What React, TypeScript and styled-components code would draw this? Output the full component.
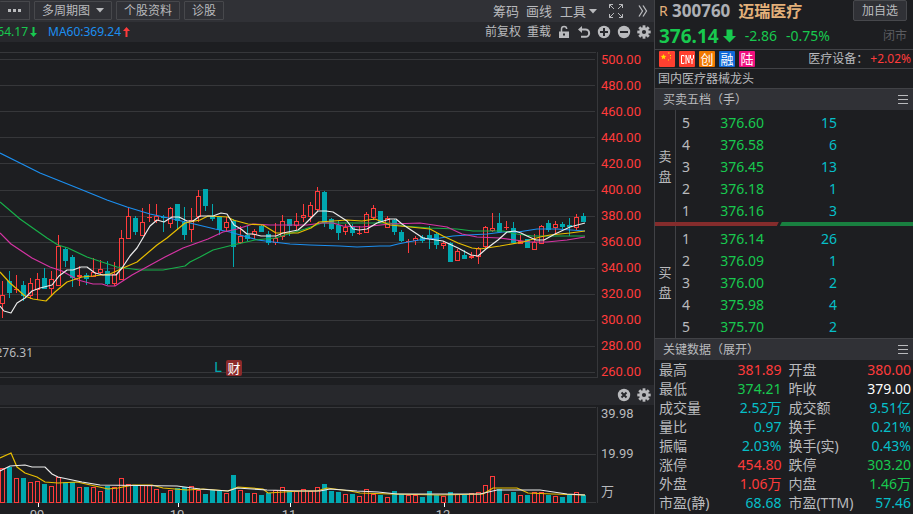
import React from "react";
import styled, { createGlobalStyle } from "styled-components";

const c = {
  bg: "#1d1e21",
  bar: "#303136",
  subbar: "#27282c",
  line: "#36373a",
  border: "#414246",
  text: "#b9babd",
  red: "#ff3b3b",
  green: "#18c94f",
  cyan: "#06bfc8",
  teal: "#00a8b0",
};

const Global = createGlobalStyle`
  * { box-sizing: border-box; }
  body {
    margin: 0;
    background: ${c.bg};
    color: ${c.text};
    font: 12px/16px "Noto Sans", "Noto Sans CJK SC", sans-serif;
    overflow: hidden;
  }
  button { font: inherit; color: inherit; cursor: pointer; }
`;

const Page = styled.div`
  display: flex;
  min-height: 100vh;
`;
const ChartSide = styled.main`
  flex: 1;
  min-width: 0;
  display: flex;
  flex-direction: column;
`;
const QuoteSide = styled.aside`
  width: 259px;
  flex: none;
  border-left: 1px solid ${c.border};
`;

const Toolbar = styled.div`
  display: flex;
  align-items: center;
  height: 22px;
  padding-right: 6px;
  background: ${c.bar};
`;
const ToolButton = styled.button<{ $edge?: boolean }>`
  display: flex;
  align-items: center;
  gap: 6px;
  height: 19px;
  margin: 0 4px 1px 0;
  padding: 0 7px;
  background: none;
  border: 1px solid #47484c;
  border-left-width: ${(p) => (p.$edge ? 0 : 1)}px;
  border-radius: 1px;
  white-space: nowrap;
`;
const Spacer = styled.div`
  flex: 1;
`;
const PlainButton = styled.button<{ $size?: number; $gap?: number }>`
  display: flex;
  align-items: center;
  gap: 3px;
  margin: 0 0 0 ${(p) => p.$gap ?? 6}px;
  padding: 0;
  border: 0;
  background: none;
  font-size: ${(p) => p.$size ?? 12}px;
  line-height: 16px;
  white-space: nowrap;
`;
const Subbar = styled.div`
  display: flex;
  align-items: center;
  height: 20px;
  padding-right: 3px;
  background: ${c.subbar};
`;
const AverageValue = styled.div<{ $color: string; $width?: number }>`
  display: flex;
  justify-content: flex-end;
  width: ${(p) => (p.$width ? p.$width + "px" : "auto")};
  overflow: hidden;
  color: ${(p) => p.$color};
`;
const MaGroup = styled.div`
  display: flex;
  align-items: center;
  gap: 2px;
  margin-right: 11px;
`;

const Pane = styled.div`
  display: flex;
`;
const Plot = styled.svg<{ $h: number }>`
  flex: 1;
  min-width: 0;
  height: ${(p) => p.$h}px;
  font: 12px "Noto Sans", "Noto Sans CJK SC", sans-serif;
`;
const PriceAxis = styled.div`
  width: 56px;
  padding: 5px 0 0 3px;
  color: ${c.red};
  font: 13px/26px Roboto, sans-serif;
`;
const VolumeAxis = styled.div`
  display: grid;
  grid-template-rows: 18px 62px 14px;
  align-content: start;
  align-items: center;
  width: 56px;
  padding-left: 3px;
  font: 13px/14px Roboto, "Noto Sans CJK SC", sans-serif;
`;

const TitleRow = styled.div`
  display: flex;
  align-items: center;
  height: 22px;
  padding: 0 6px 0 4px;
  color: #e3b07a;
`;
const Mark = styled.span`
  font-size: 14px;
  width: 13px;
`;
const Code = styled.strong`
  color: #aeb0b5;
  font-size: 17px;
  line-height: 22px;
  margin-right: 8px;
`;
const Name = styled.strong`
  font-size: 16px;
  line-height: 22px;
`;
const AddButton = styled.button`
  height: 21px;
  width: 54px;
  margin: 0 0 1px;
  padding: 0;
  border: 1px solid #47484c;
  border-radius: 2px;
  background: ${c.bar};
  color: ${c.text};
`;
const PriceRow = styled.div`
  display: flex;
  align-items: center;
  height: 27px;
  padding: 0 6px 0 4px;
  color: ${c.green};
  font-size: 14px;
`;
const Last = styled.strong`
  font-size: 19px;
  line-height: 24px;
  margin-right: 4px;
`;
const Delta = styled.span`
  margin-left: 9px;
`;
const Status = styled.span`
  color: #5b5c60;
  font-size: 12px;
`;
const BadgeRow = styled.div`
  display: flex;
  align-items: center;
  gap: 4px;
  height: 19px;
  padding: 0 2px 0 4px;
  border-top: 1px solid ${c.border};
`;
const Badge = styled.span<{ $bg: string }>`
  width: 16px;
  height: 16px;
  border-radius: 1px;
  background: ${(p) => p.$bg};
  color: #fff;
  font-size: 13px;
  line-height: 16px;
  text-align: center;
`;
const Sector = styled.span`
  margin-left: auto;
  white-space: nowrap;
`;
const SectorMove = styled.span`
  margin-left: 2px;
  color: ${c.red};
`;
const Note = styled.div`
  height: 20px;
  padding-left: 3px;
  border-top: 1px solid ${c.border};
  line-height: 19px;
`;
const SectionHead = styled.div`
  display: flex;
  align-items: center;
  justify-content: space-between;
  height: 22px;
  padding: 0 5px 0 8px;
  border-top: 1px solid ${c.border};
  background: ${c.bar};
`;
const Book = styled.div`
  display: flex;
  height: 112px;
`;
const BookSide = styled.div`
  display: flex;
  flex-direction: column;
  justify-content: center;
  width: 21px;
  border-right: 1px solid ${c.border};
  font-size: 13px;
  line-height: 20px;
  text-align: center;
`;
const BookTable = styled.table`
  flex: 1;
  margin-top: 2px;
  border-collapse: collapse;
  table-layout: fixed;
  font-size: 14px;
  line-height: 22px;
  td { padding: 0; height: 22px; }
`;
const Level = styled.td`
  width: 32px;
  text-indent: 6px;
`;
const BookPrice = styled.td`
  width: 56px;
  color: ${c.green};
  text-align: right;
`;
const BookVolume = styled.td`
  width: 73px;
  color: ${c.cyan};
  text-align: right;
`;
const Ratio = styled.div`
  display: flex;
  height: 4px;
`;
const RatioPart = styled.div<{ $sell?: boolean }>`
  width: ${(p) => (p.$sell ? "48%" : "52%")};
  background: ${(p) => (p.$sell ? "#842c2c" : "#198040")};
  clip-path: ${(p) =>
    p.$sell
      ? "polygon(0 0, 100% 0, calc(100% - 2px) 100%, 0 100%)"
      : "polygon(3px 0, 100% 0, 100% 100%, 1px 100%)"};
`;
const Metrics = styled.table`
  width: 100%;
  border-collapse: collapse;
  table-layout: fixed;
  font-size: 14px;
  line-height: 19px;
  white-space: nowrap;
`;
const MetricName = styled.th<{ $second?: boolean }>`
  width: ${(p) => (p.$second ? 30 : 25)}%;
  padding: 0 0 0 ${(p) => (p.$second ? 7 : 4)}px;
  font-weight: 400;
  text-align: left;
`;
const MetricValue = styled.td<{ $color: string; $second?: boolean }>`
  width: ${(p) => (p.$second ? 21 : 24)}%;
  padding: 0 ${(p) => (p.$second ? 2 : 0)}px 0 0;
  color: ${(p) => p.$color};
  text-align: right;
`;

/* [rising, high, low, body top, body bottom] for each session */
type Candle = [number, number, number, number, number];
const candles: Candle[] = [
  [1, 281, 318, 295, 304], [0, 271, 298, 281, 293], [1, 275, 293, 289, 290], [0, 281, 301, 285, 296],
  [1, 278, 299, 283, 296], [1, 273, 300, 279, 290], [0, 268, 289, 278, 289], [1, 271, 296, 279, 289],
  [1, 235, 286, 246, 286], [0, 247, 267, 249, 261], [0, 255, 287, 257, 278], [1, 266, 286, 275, 277],
  [0, 273, 285, 275, 279], [1, 258, 277, 272, 277], [1, 260, 274, 269, 273], [0, 261, 285, 271, 284],
  [1, 262, 286, 274, 284], [1, 230, 280, 238, 280], [1, 208, 239, 216, 239], [0, 216, 235, 218, 232],
  [1, 208, 236, 222, 236], [1, 204, 222, 217, 218], [1, 204, 223, 216, 221], [0, 215, 232, 217, 218],
  [1, 207, 228, 208, 224], [0, 204, 230, 204, 221], [0, 207, 240, 222, 235], [1, 208, 242, 220, 230],
  [1, 190, 222, 196, 217], [0, 189, 211, 189, 206], [0, 204, 221, 216, 219], [0, 217, 235, 217, 230],
  [1, 217, 232, 222, 228], [0, 219, 267, 221, 247], [1, 226, 244, 236, 243], [0, 226, 241, 235, 239],
  [1, 229, 239, 231, 235], [0, 224, 232, 226, 232], [0, 231, 245, 234, 243], [1, 223, 245, 238, 243],
  [1, 215, 240, 221, 237], [0, 219, 236, 219, 226], [1, 213, 230, 221, 226], [1, 204, 222, 215, 218],
  [1, 202, 222, 205, 217], [1, 187, 211, 191, 210], [0, 191, 227, 192, 223], [0, 218, 230, 219, 229],
  [0, 221, 240, 225, 233], [1, 224, 235, 227, 232], [0, 224, 236, 227, 233], [1, 226, 235, 233, 234],
  [1, 212, 233, 214, 233], [1, 205, 220, 208, 218], [0, 211, 222, 211, 222], [1, 216, 228, 218, 228],
  [0, 219, 235, 220, 232], [0, 230, 242, 232, 241], [1, 239, 253, 241, 242], [1, 236, 245, 238, 241],
  [0, 235, 243, 237, 241], [0, 226, 249, 235, 239], [0, 232, 249, 234, 245], [1, 241, 249, 243, 246],
  [0, 242, 262, 243, 262], [1, 249, 261, 251, 261], [0, 250, 259, 255, 259], [1, 252, 259, 256, 258],
  [1, 247, 264, 248, 257], [1, 226, 248, 227, 247], [1, 213, 232, 228, 231], [0, 213, 232, 223, 232],
  [1, 221, 230, 227, 228], [0, 222, 244, 228, 243], [1, 234, 244, 241, 244], [0, 239, 248, 239, 248],
  [1, 234, 250, 242, 250], [1, 225, 244, 226, 244], [0, 220, 232, 223, 230], [1, 221, 234, 224, 228],
  [0, 222, 229, 224, 227], [0, 218, 236, 225, 227], [1, 214, 230, 217, 228], [0, 213, 222, 216, 222],
];

const volumes = [
  468, 467, 478, 478, 482, 481, 484, 486, 477, 482, 482, 487, 487, 487, 491, 486, 487, 478, 484, 486, 485,
  485, 489, 493, 490, 488, 487, 486, 490, 494, 490, 491, 493, 475, 490, 493, 493, 495, 493, 490, 487, 491,
  491, 489, 491, 487, 484, 491, 492, 494, 494, 496, 489, 494, 495, 497, 491, 494, 495, 495, 497, 491, 495,
  496, 492, 494, 495, 493, 492, 485, 476, 489, 494, 492, 495, 495, 492, 492, 495, 496, 497, 495, 492, 495,
];

const averages = [
  { color: "#1c8ff0", points: "0,153 20,163 40,173 60,181 80,189 107,200 127,207 150,214 173,219 190,223 215,229 230,232 247,237 258,240 273,242 290,244 310,245 340,246 357,247 380,246 390,246 398,244 408,242 425,239 440,238 453,236 468,235 487,234 503,232 518,232 537,229 557,229 585,231" },
  { color: "#18b04a", points: "0,202 20,219 47,238 58,245 68,248 87,257 117,267 140,270 163,270 185,266 190,262 200,257 213,250 233,245 255,240 275,238 305,229 322,223 390,223 403,226 430,228 457,229 473,231 503,231 517,234 532,236 585,236" },
  { color: "#d634a4", points: "0,233 11,244 32,258 50,267 62,271 78,280 93,284 102,284 108,286 115,286 132,275 143,269 165,257 183,248 208,239 223,232 237,229 253,224 270,225 307,225 322,223 333,223 343,226 362,227 390,224 420,223 447,227 462,234 477,237 500,238 515,240 530,242 547,242 567,240 585,237" },
  { color: "#e8be00", points: "0,272 10,283 25,296 33,299 46,301 55,292 67,282 82,277 93,276 110,274 123,268 137,262 157,245 167,238 185,223 200,220 208,216 228,217 233,220 248,224 263,225 276,233 298,233 311,228 319,222 347,220 362,221 375,219 390,225 430,229 443,236 458,243 472,248 480,249 500,246 523,242 540,237 550,235 570,233 585,231" },
  { color: "#ececec", points: "0,306 4,311 11,313 17,303 25,298 32,291 40,288 52,285 59,276 67,270 73,270 81,267 87,267 95,273 103,275 116,275 122,268 130,256 137,248 150,226 157,220 164,222 172,217 179,217 187,221 193,221 200,216 213,216 221,213 227,214 234,225 241,229 247,234 253,234 261,236 276,236 283,233 298,230 304,225 318,211 326,211 333,212 347,221 353,229 359,230 367,229 377,223 390,219 396,219 402,224 423,238 429,239 443,241 458,248 471,255 478,256 486,249 498,240 507,232 515,231 521,233 527,236 536,240 544,240 555,234 570,227 585,223" },
];

const volumeAverages = [
  { color: "#e8be00", points: "0,458 11,453 17,467 25,473 37,477 45,482 58,483 77,482 95,486 108,489 118,488 133,485 152,485 163,488 187,490 203,489 228,491 238,487 263,489 268,493 300,491 317,491 327,488 350,491 360,493 390,494 440,495 483,494 493,488 517,488 528,493 553,494 585,495" },
  { color: "#ececec", points: "0,471 10,466 25,465 32,467 45,467 52,474 58,477 82,482 100,485 177,486 200,489 228,491 237,488 267,490 300,491 320,491 330,489 357,491 378,492 397,494 480,494 497,490 540,490 567,494 585,495" },
];

const centre = (i: number) => 2 + i * 7;

function CandleShape({ d, x }: { d: Candle; x: number }) {
  const [up, high, low, top, bottom] = d;
  if (!up)
    return (
      <g fill={c.teal}>
        <rect x={x} y={high} width={1} height={low - high} />
        <rect x={x - 2} y={top} width={5} height={bottom - top} />
      </g>
    );
  return (
    <g fill={c.red}>
      <rect x={x} y={high} width={1} height={Math.max(top - high, 0)} />
      <rect x={x} y={bottom} width={1} height={Math.max(low - bottom, 0)} />
      {bottom - top < 3 ? (
        <rect x={x - 2} y={top} width={5} height={bottom - top} />
      ) : (
        <rect x={x - 1.5} y={top + 0.5} width={4} height={bottom - top - 1} fill="none" stroke={c.red} />
      )}
    </g>
  );
}

function PricePlot() {
  return (
    <Plot $h={343} viewBox="0 42 598 343" preserveAspectRatio="xMaxYMin meet" aria-label="K线图">
      <g fill={c.line} shapeRendering="crispEdges">
        <rect y={52} width={596} height={1} />
        {Array.from({ length: 13 }, (_, i) => (
          <rect key={i} y={(i < 5 ? 59 : 60) + i * 26} width={595} height={1} />
        ))}
        <rect y={377} width={598} height={1} />
        <rect x={597} y={52} width={1} height={326} />
      </g>
      <g shapeRendering="crispEdges">
        {candles.map((d, i) => (
          <CandleShape key={i} d={d} x={centre(i)} />
        ))}
      </g>
      <g fill="none" strokeWidth={1.2} strokeLinejoin="round">
        {averages.map((a) => (
          <polyline key={a.color} points={a.points} stroke={a.color} />
        ))}
      </g>
      <text x={33} y={357} textAnchor="end" fill={c.text}>276.31</text>
      <text x={214} y={372} fill={c.teal} fontSize={15}>L</text>
      <rect x={226} y={360} width={16} height={16} rx={2} fill="#8c2a2a" />
      <text x={234} y={373} textAnchor="middle" fill="#fff" fontSize={13}>财</text>
    </Plot>
  );
}

function VolumePlot() {
  return (
    <Plot $h={109} viewBox="0 405 598 109" preserveAspectRatio="xMaxYMin meet" aria-label="成交量">
      <g fill={c.line} shapeRendering="crispEdges">
        <rect y={407} width={596} height={1} />
        <rect y={454} width={596} height={1} />
        <rect y={502} width={596} height={1} />
        <rect x={597} y={407} width={1} height={96} />
      </g>
      <g shapeRendering="crispEdges">
        {volumes.map((top, i) =>
          candles[i][0] ? (
            <rect key={i} x={centre(i) - 1.5} y={top + 0.5} width={4} height={502 - top} fill="none" stroke={c.red} />
          ) : (
            <rect key={i} x={centre(i) - 2} y={top} width={5} height={503 - top} fill={c.teal} />
          )
        )}
      </g>
      <g fill="none" strokeWidth={1.2}>
        {volumeAverages.map((a) => (
          <polyline key={a.color} points={a.points} stroke={a.color} />
        ))}
      </g>
      {[["09", 38], ["10", 178], ["11", 290], ["12", 444]].map(([month, x]) => (
        <g key={month} fill={c.text}>
          <rect x={x} y={503} width={1} height={4} fill="#fff" />
          <text x={Number(x) - 1} y={519} textAnchor="middle" fontSize={13} fontFamily="Roboto, sans-serif">
            {month}
          </text>
        </g>
      ))}
    </Plot>
  );
}

const Caret = () => (
  <svg width="8" height="5" viewBox="0 0 8 5"><path d="M0 0h8L4 4.5z" fill={c.text} /></svg>
);
const Gear = () => (
  <svg width="14" height="14" viewBox="-7 -7 14 14">
    {[0, 45, 90, 135].map((a) => (
      <rect key={a} x="-1.4" y="-6.7" width="2.8" height="13.4" fill={c.text} transform={`rotate(${a})`} />
    ))}
    <circle r="4.8" fill={c.text} />
    <circle r="2.1" fill={c.subbar} />
  </svg>
);
const Disc = ({ d }: { d: string }) => (
  <svg width="14" height="14" viewBox="-7 -7 14 14">
    <circle r="6.2" fill={c.text} />
    <path d={d} stroke={c.subbar} strokeWidth="2" />
  </svg>
);
const Lock = () => (
  <svg width="14" height="14" viewBox="0 0 14 14">
    <path d="M4.5 7V4a2.6 2.6 0 0 1 5.2 0" fill="none" stroke={c.text} strokeWidth="1.5" />
    <path d="M2 6.5h10V13H2z" fill={c.text} />
    <path d="M6 8.5h2v2H6z" fill={c.subbar} />
  </svg>
);
const Undo = () => (
  <svg width="14" height="14" viewBox="0 0 14 14">
    <path d="M1 4.5 5 1v7z" fill={c.text} />
    <path d="M4 4.5h4.5a3.6 3.6 0 0 1 0 7.3H4" fill="none" stroke={c.text} strokeWidth="2" />
  </svg>
);
const Expand = () => (
  <svg width="16" height="16" viewBox="0 0 16 16" fill="none" stroke={c.text}>
    <path d="M1.5 5V1.5H5M1.5 1.5 6 6M11 1.5h3.5V5M14.5 1.5 10 6M1.5 11v3.5H5M1.5 14.5 6 10M14.5 11v3.5H11M14.5 14.5 10 10" />
  </svg>
);
const More = () => (
  <svg width="10" height="14" viewBox="0 0 10 14" fill="none" stroke={c.text} strokeWidth="1.3">
    <path d="M1 1.5 4.5 7 1 12.5M5 1.5 8.5 7 5 12.5" />
  </svg>
);
const MenuLines = () => (
  <svg width="10" height="9" viewBox="0 0 10 9"><path d="M0 .5h10M0 4.5h10M0 8.5h10" stroke={c.text} /></svg>
);
const Arrow = ({ color, up }: { color: string; up?: boolean }) => (
  <svg width="7" height="11" viewBox="0 0 7 11">
    <path d={up ? "M3.5 0 7 4H4.5v6h-2V4H0z" : "M3.5 10 7 6H4.5V0h-2v6H0z"} fill={color} />
  </svg>
);
const BigArrow = () => (
  <svg width="13" height="14" viewBox="0 0 13 14"><path d="M3.5 .5h6V7H13l-6.5 6.5L0 7h3.5z" fill={c.green} /></svg>
);
const Flag = () => (
  <svg width="16" height="16" viewBox="0 0 16 16">
    <path d="m4.5 3 .8 1.8 2 .2-1.5 1.3.4 2-1.7-1-1.7 1 .4-2L1.700 5l2-.2z" fill="#ffe000" />
    <path d="M9 1.5h1.5v1H9zM11 4h1v1h-1zM11 6.5h1v1h-1zM9 8.5h1v1H9z" fill="#ffe000" />
  </svg>
);
const Dots = () => (
  <svg width="15" height="3" viewBox="0 0 15 3"><path d="M1 0h3v3H1zM6 0h3v3H6zM11 0h3v3h-3z" fill={c.text} /></svg>
);
const CnyMark = () => (
  <svg width="16" height="16" viewBox="0 0 16 16" fill="none" stroke="#fff" aria-label="CNY">
    <path d="M5 5.5V4.5H2.500v8H5v-1M7 13V4l3 8V4M11.500 4v3l1.500 2 1.500-2V4M13 9v4" />
  </svg>
);

type BookRow = [number, string, number];
function BookHalf({ side, rows }: { side: string[]; rows: BookRow[] }) {
  return (
    <Book>
      <BookSide>{side.map((s) => <span key={s}>{s}</span>)}</BookSide>
      <BookTable>
        <tbody>
          {rows.map(([level, price, volume]) => (
            <tr key={level}>
              <Level>{level}</Level>
              <BookPrice>{price}</BookPrice>
              <BookVolume>{volume}</BookVolume>
              <td />
            </tr>
          ))}
        </tbody>
      </BookTable>
    </Book>
  );
}

const metrics: [string, string, string, string, string, string][] = [
  ["最高", "381.89", c.red, "开盘", "380.00", c.red],
  ["最低", "374.21", c.green, "昨收", "379.00", "#fff"],
  ["成交量", "2.52万", c.cyan, "成交额", "9.51亿", c.cyan],
  ["量比", "0.97", c.cyan, "换手", "0.21%", c.cyan],
  ["振幅", "2.03%", c.cyan, "换手(实)", "0.43%", c.cyan],
  ["涨停", "454.80", c.red, "跌停", "303.20", c.green],
  ["外盘", "1.06万", c.red, "内盘", "1.46万", c.green],
  ["市盈(静)", "68.68", c.cyan, "市盈(TTM)", "57.46", c.cyan],
];

export default function App() {
  return (
    <Page>
      <Global />
      <ChartSide>
        <Toolbar>
          <ToolButton $edge aria-label="更多"><Dots /></ToolButton>
          <ToolButton>多周期图 <Caret /></ToolButton>
          <ToolButton>个股资料</ToolButton>
          <ToolButton>诊股</ToolButton>
          <Spacer />
          <PlainButton $size={13}>筹码</PlainButton>
          <PlainButton $size={13} $gap={7}>画线</PlainButton>
          <PlainButton $size={13} $gap={8}>工具<Caret /></PlainButton>
          <PlainButton $gap={11} aria-label="全屏"><Expand /></PlainButton>
          <PlainButton $gap={14} aria-label="展开"><More /></PlainButton>
        </Toolbar>
        <Subbar>
          <MaGroup>
            <AverageValue $color={c.green} $width={28}>364.17</AverageValue>
            <Arrow color={c.green} />
          </MaGroup>
          <MaGroup>
            <AverageValue $color="#1c8ff0">MA60:369.24</AverageValue>
            <Arrow color={c.red} up />
          </MaGroup>
          <Spacer />
          <PlainButton>前复权</PlainButton>
          <PlainButton>重载</PlainButton>
          <PlainButton aria-label="锁定"><Lock /></PlainButton>
          <PlainButton aria-label="撤销"><Undo /></PlainButton>
          <PlainButton aria-label="放大"><Disc d="M-4 0h8M0-4v8" /></PlainButton>
          <PlainButton aria-label="缩小"><Disc d="M-4 0h8" /></PlainButton>
          <PlainButton aria-label="设置"><Gear /></PlainButton>
        </Subbar>
        <Pane>
          <PricePlot />
          <PriceAxis>
            {Array.from({ length: 13 }, (_, i) => (
              <div key={i}>{(500 - i * 20).toFixed(2)}</div>
            ))}
          </PriceAxis>
        </Pane>
        <Subbar>
          <Spacer />
          <PlainButton aria-label="关闭"><Disc d="m-2.5-2.5 5 5m0-5-5 5" /></PlainButton>
          <PlainButton aria-label="指标设置"><Gear /></PlainButton>
        </Subbar>
        <Pane>
          <VolumePlot />
          <VolumeAxis>
            <span>39.98</span>
            <span>19.99</span>
            <span>万</span>
          </VolumeAxis>
        </Pane>
      </ChartSide>

      <QuoteSide>
        <TitleRow>
          <Mark>R</Mark>
          <Code>300760</Code>
          <Name>迈瑞医疗</Name>
          <Spacer />
          <AddButton>加自选</AddButton>
        </TitleRow>
        <PriceRow>
          <Last>376.14</Last>
          <BigArrow />
          <Delta>-2.86</Delta>
          <Delta>-0.75%</Delta>
          <Spacer />
          <Status>闭市</Status>
        </PriceRow>
        <BadgeRow>
          <Badge $bg="#ff4030"><Flag /></Badge>
          <Badge $bg="#ff4030"><CnyMark /></Badge>
          <Badge $bg="#f07800">创</Badge>
          <Badge $bg="#1068d8">融</Badge>
          <Badge $bg="#f01080">陆</Badge>
          <Sector>医疗设备：<SectorMove>+2.02%</SectorMove></Sector>
        </BadgeRow>
        <Note>国内医疗器械龙头</Note>
        <SectionHead>买卖五档（手）<MenuLines /></SectionHead>
        <BookHalf
          side={["卖", "盘"]}
          rows={[[5, "376.60", 15], [4, "376.58", 6], [3, "376.45", 13], [2, "376.18", 1], [1, "376.16", 3]]}
        />
        <Ratio>
          <RatioPart $sell />
          <RatioPart />
        </Ratio>
        <BookHalf
          side={["买", "盘"]}
          rows={[[1, "376.14", 26], [2, "376.09", 1], [3, "376.00", 2], [4, "375.98", 4], [5, "375.70", 2]]}
        />
        <SectionHead>关键数据（展开）<MenuLines /></SectionHead>
        <Metrics>
          <tbody>
            {metrics.map(([a, av, ac, b, bv, bc]) => (
              <tr key={a}>
                <MetricName scope="row">{a}</MetricName>
                <MetricValue $color={ac}>{av}</MetricValue>
                <MetricName scope="row" $second>{b}</MetricName>
                <MetricValue $color={bc} $second>{bv}</MetricValue>
              </tr>
            ))}
          </tbody>
        </Metrics>
      </QuoteSide>
    </Page>
  );
}
